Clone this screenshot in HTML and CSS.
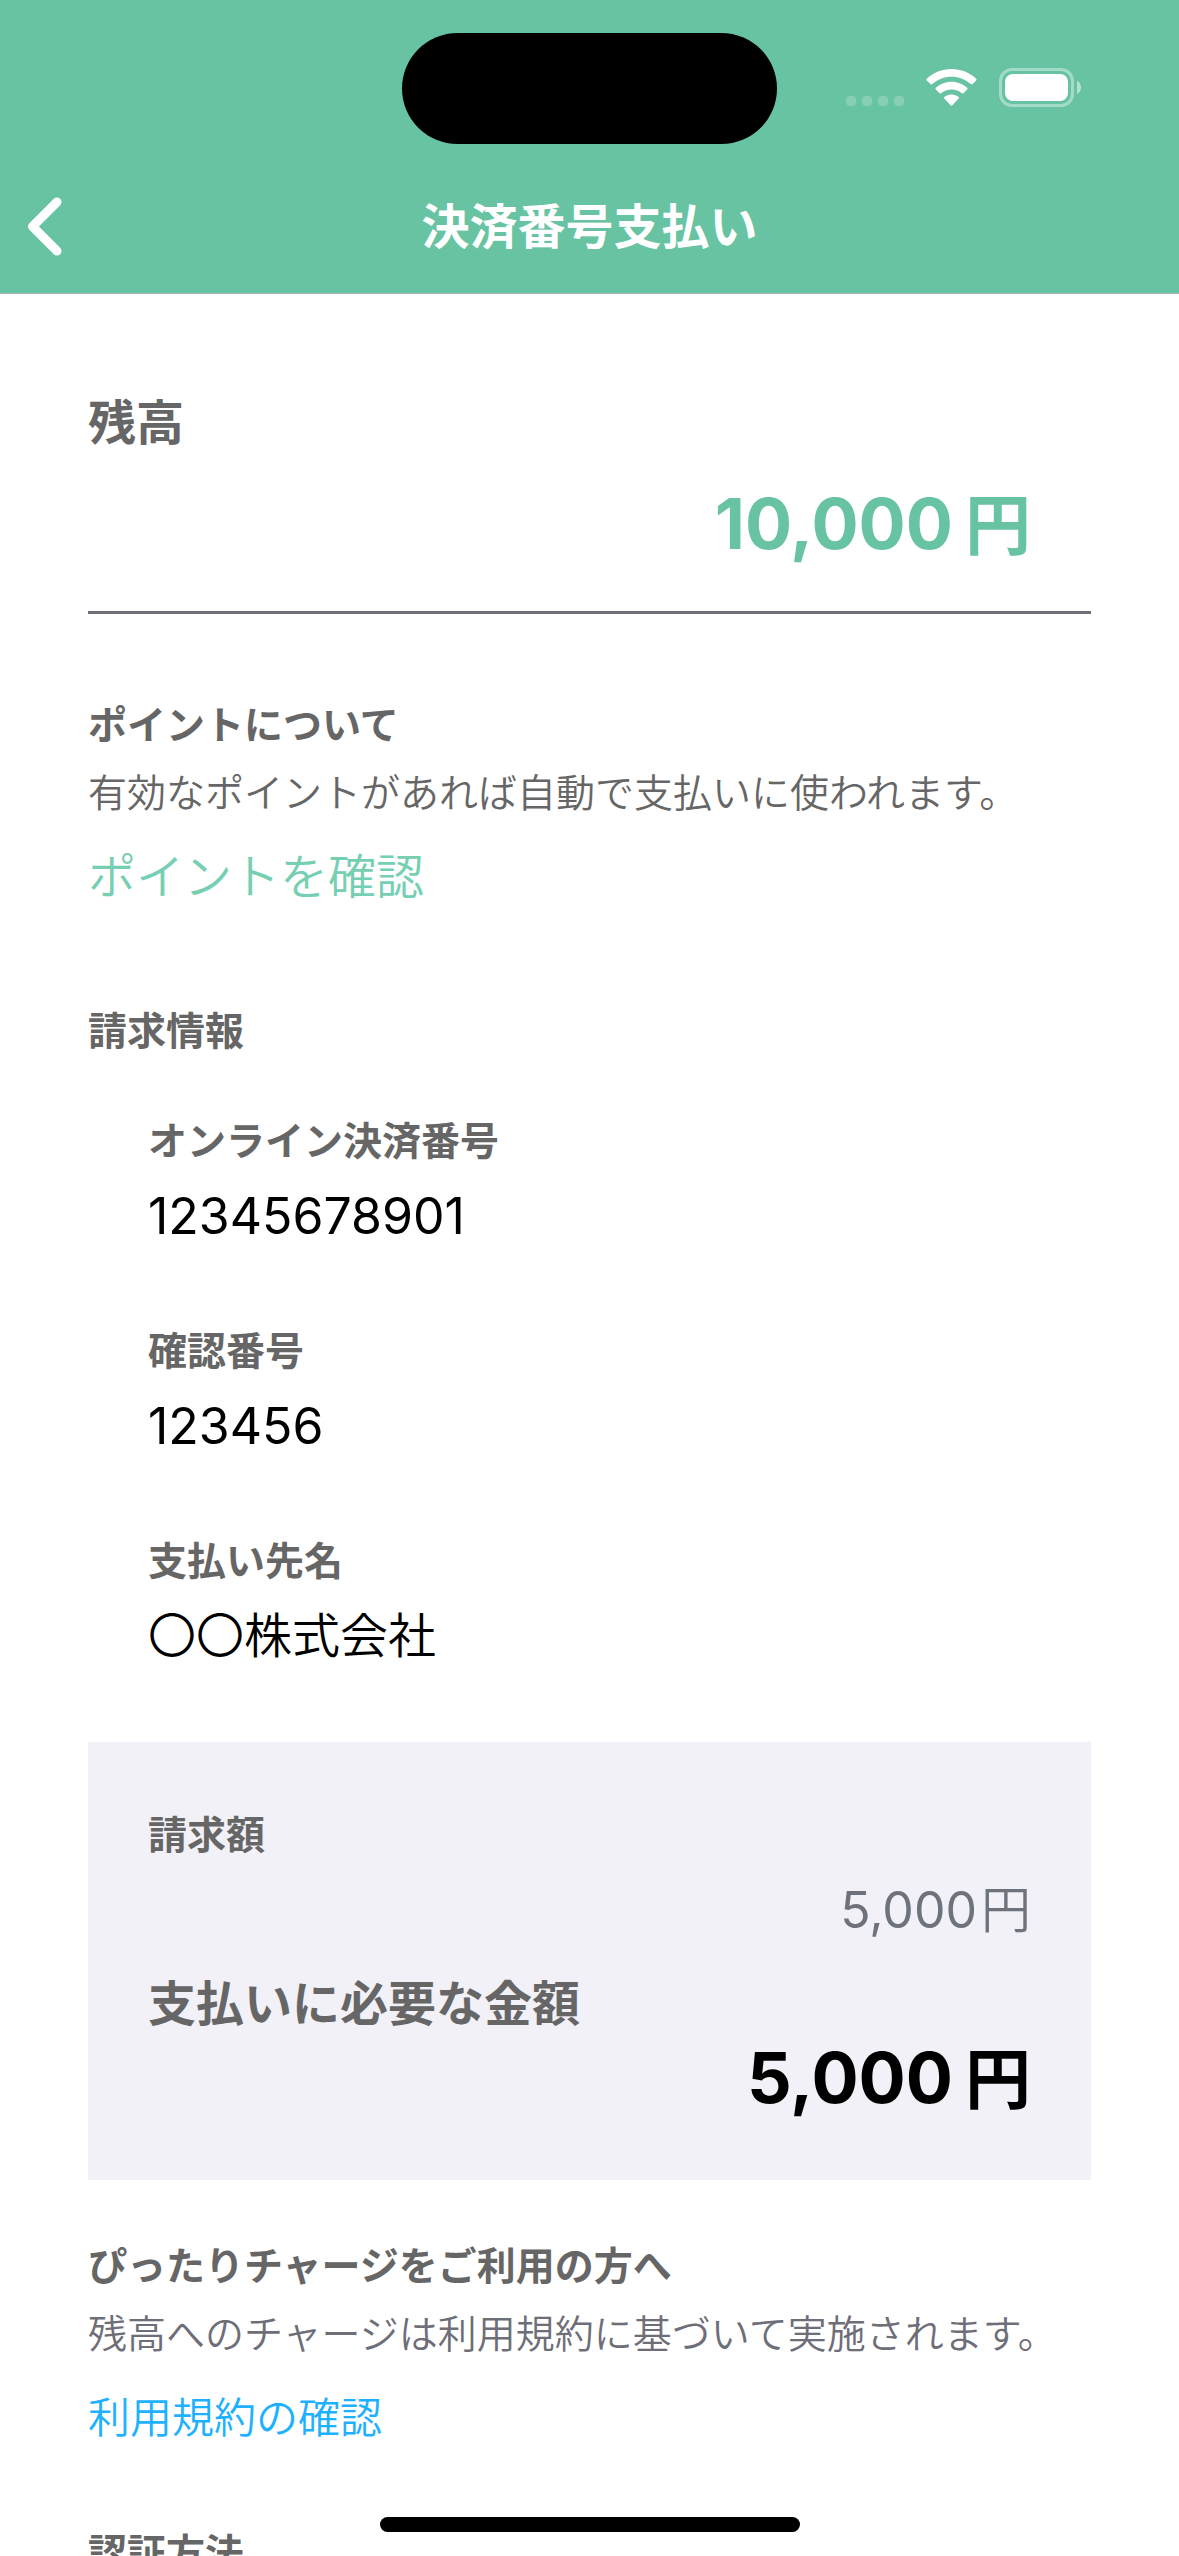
FILE: index.html
```html
<!DOCTYPE html>
<html lang="ja">
<head>
<meta charset="utf-8">
<meta name="viewport" content="width=device-width, initial-scale=1">
<title>決済番号支払い</title>
<link rel="stylesheet" href="styles.css">
</head>
<body>
<div class="app">
  <header class="header">
    <div class="status">
      <div class="island"></div>
      <div class="status-icons">
        <svg width="58" height="41" viewBox="0 0 58 41" fill="#fff" fill-opacity=".2" aria-hidden="true">
          <rect x="0" y="28" width="10" height="10" rx="4"/>
          <rect x="16" y="28" width="10" height="10" rx="4"/>
          <rect x="32" y="28" width="10" height="10" rx="4"/>
          <rect x="48" y="28" width="10" height="10" rx="4"/>
        </svg>
        <svg width="51" height="41" viewBox="0 0 51 41" fill="#fff" aria-hidden="true">
          <path d="M25.500 1C35 1 43.800 4.600 50.200 10.800Q51 11.700 50.200 12.500L46.600 16.100Q45.700 16.800 44.800 16.100C39.500 11.400 32.800 8.800 25.500 8.800S11.500 11.400 6.200 16.100Q5.300 16.800 4.400 16.100L.800 12.500Q0 11.700 .800 10.800C7.200 4.600 16 1 25.500 1Z"/>
          <path d="M25.500 13.700C31.500 13.700 37 16 41.200 19.800Q42 20.700 41.200 21.500L37.500 25.200Q36.700 25.900 35.800 25.200C33 22.800 29.400 21.500 25.500 21.500S18 22.800 15.200 25.200Q14.300 25.900 13.500 25.200L9.800 21.500Q9 20.700 9.800 19.800C14 16 19.500 13.700 25.500 13.700Z"/>
          <path d="M25.500 26.400C28.300 26.400 30.800 27.400 32.700 29Q33.500 29.800 32.700 30.600L26.400 37.200Q25.500 38.100 24.600 37.200L18.300 30.600Q17.500 29.800 18.300 29C20.200 27.400 22.700 26.400 25.500 26.400Z"/>
        </svg>
        <svg width="83" height="41" viewBox="0 0 83 41" aria-hidden="true">
          <rect x="1.500" y="1.500" width="72" height="36" rx="11.500" fill="none" stroke="#fff" stroke-opacity=".4" stroke-width="3"/>
          <rect x="6" y="6" width="63" height="27" rx="8" fill="#fff"/>
          <path d="M78 13C80.500 14 82 16.500 82 19.500S80.500 25 78 26Z" fill="#fff" fill-opacity=".5"/>
        </svg>
      </div>
    </div>
    <div class="nav">
      <button class="back" type="button" aria-label="戻る">
        <svg width="35" height="60" viewBox="0 0 35 60" fill="none" stroke="#fff" stroke-width="9" stroke-linecap="round" stroke-linejoin="round" aria-hidden="true">
          <path d="M30 5L5.500 29.500L30 54"/>
        </svg>
      </button>
      <h1 class="title">決済番号支払い</h1>
    </div>
  </header>

  <main class="content">
    <section class="balance">
      <h2 class="heading heading-large">残高</h2>
      <p class="amount amount-large">10,000<span class="unit">円</span></p>
    </section>

    <section class="points">
      <h2 class="heading">ポイントについて</h2>
      <p class="note">有効なポイントがあれば自動で支払いに使われます。</p>
      <a class="link link-points" href="#points">ポイントを確認</a>
    </section>

    <section class="billing">
      <h2 class="heading">請求情報</h2>
      <dl class="details">
        <div class="detail"><dt class="heading">オンライン決済番号</dt><dd class="value">12345678901</dd></div>
        <div class="detail"><dt class="heading">確認番号</dt><dd class="value">123456</dd></div>
        <div class="detail"><dt class="heading">支払い先名</dt><dd class="value value-name">〇〇株式会社</dd></div>
      </dl>
    </section>

    <section class="summary">
      <h2 class="heading">請求額</h2>
      <p class="amount amount-billed">5,000<span class="unit">円</span></p>
      <h2 class="heading heading-large heading-total">支払いに必要な金額</h2>
      <p class="amount amount-large amount-total">5,000<span class="unit">円</span></p>
    </section>

    <section class="charge">
      <h2 class="heading">ぴったりチャージをご利用の方へ</h2>
      <p class="note note-charge">残高へのチャージは利用規約に基づいて実施されます。</p>
      <a class="link link-terms" href="#terms">利用規約の確認</a>
    </section>

    <section class="auth">
      <h2 class="heading">認証方法</h2>
    </section>
  </main>
  <div class="home-indicator"></div>
</div>
</body>
</html>
```
FILE: styles.css
```css
* {
  box-sizing: border-box;
}

body,
h1,
h2,
p,
dl,
dd {
  margin: 0;
}

body {
  background: #fff;
  color: #000;
  font-family: "Inter", "Noto Sans CJK JP", sans-serif;
}

.app {
  position: relative;
  display: flex;
  flex-direction: column;
  height: 100vh;
  overflow: hidden;
}

/* Header */

.header {
  flex: none;
  padding-top: 33px;
  background: #68c3a3;
  border-bottom: 1px solid #b2b2b2;
}

.status {
  display: grid;
  grid-template-columns: 1fr 375px 1fr;
  align-items: center;
}

.island {
  grid-column: 2;
  height: 111px;
  border-radius: 56px;
  background: #000;
}

.status-icons {
  display: flex;
  justify-content: flex-end;
  gap: 22px;
  padding-right: 97px;
}

.nav {
  display: grid;
  grid-template-columns: 120px 1fr 120px;
  align-items: center;
  height: 132px;
  margin-top: 17px;
}

.back {
  display: flex;
  padding: 0 0 0 27px;
  border: 0;
  background: none;
  cursor: pointer;
}

.title {
  color: #fff;
  font-size: 48px;
  font-weight: 600;
  line-height: 60px;
  text-align: center;
}

/* Content */

.content {
  flex: 1;
  min-height: 0;
  padding: 99px 88px 0;
  overflow-y: auto;
  scrollbar-width: none;
}

.heading {
  color: #666;
  font-size: 39px;
  font-weight: 600;
  line-height: 48px;
}

.heading-large {
  font-size: 48px;
  line-height: 60px;
}

.note {
  margin-top: 20px;
  color: #666;
  font-size: 39px;
  font-weight: 350;
  line-height: 48px;
}

.note-charge {
  color: #6e6e78;
}

.link {
  display: block;
  width: fit-content;
  margin-top: 30px;
  font-weight: 350;
  line-height: 60px;
  text-decoration: none;
}

.link-points {
  color: #76cfb2;
  font-size: 48px;
}

.link-terms {
  color: #1eb1ff;
  font-size: 42px;
}

.amount {
  text-align: right;
}

.unit {
  margin-left: 4px;
  font-weight: 350;
  line-height: 1;
}

.amount-large {
  font-size: 70px;
  font-weight: 700;
  line-height: 72px;
}

.amount-large .unit {
  margin-left: 12px;
  font-size: 66px;
  font-weight: 700;
}

.balance {
  padding-bottom: 51px;
  border-bottom: 3px solid #6e6e78;
}

.balance .amount {
  margin-top: 35px;
  padding-right: 60px;
  color: #68c3a3;
}

.points {
  margin-top: 87px;
}

.billing {
  margin-top: 100px;
}

.details {
  display: flex;
  flex-direction: column;
  gap: 81px;
  margin-top: 62px;
  padding-left: 60px;
}

.value {
  margin-top: 21px;
  font-size: 50px;
  line-height: 60px;
}

.value-name {
  font-size: 48px;
  font-weight: 350;
}

.summary {
  margin-top: 76px;
  padding: 69px 60px 66px;
  background: #f2f1f7;
}

.amount-billed {
  margin-top: 21px;
  color: #6e727c;
  font-size: 50px;
  font-weight: 400;
  line-height: 60px;
}

.heading-total {
  margin-top: 34px;
}

.amount-total {
  margin-top: 8px;
}

.charge {
  margin-top: 62px;
}

.auth {
  margin-top: 81px;
}

.home-indicator {
  position: absolute;
  bottom: 24px;
  left: 50%;
  width: 420px;
  height: 15px;
  margin-left: -210px;
  border-radius: 8px;
  background: #000;
}
```
